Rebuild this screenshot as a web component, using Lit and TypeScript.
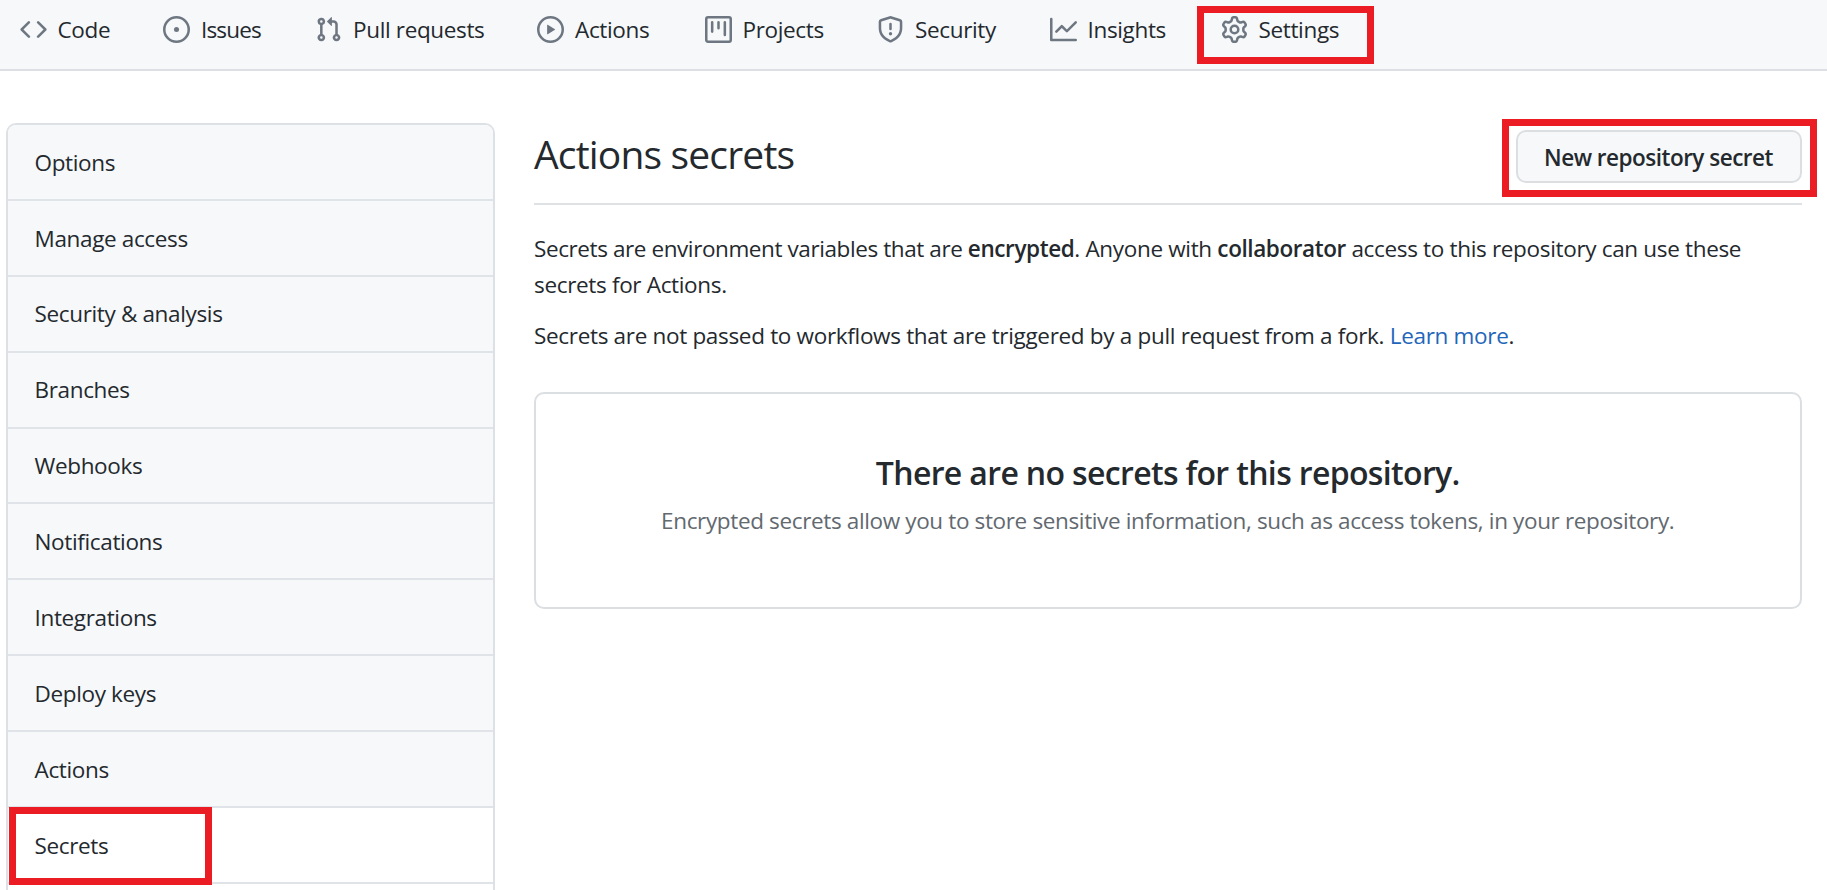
import { LitElement, html, css, svg } from "lit";
import { customElement } from "lit/decorators.js";
import { classMap } from "lit/directives/class-map.js";

// 16px icon set, drawn with the current text colour.
const icons = {
  code: svg`<path fill-rule="evenodd" d="M4.72 3.22a.75.75 0 011.06 1.06L2.06 8l3.72 3.72a.75.75 0 11-1.06 1.06L.47 8.53a.75.75 0 010-1.06l4.25-4.25zm6.56 0a.75.75 0 10-1.06 1.06L13.94 8l-3.72 3.72a.75.75 0 101.06 1.06l4.25-4.25a.75.75 0 000-1.06l-4.25-4.25z"></path>`,
  issue: svg`<path d="M8 9.5a1.5 1.5 0 100-3 1.5 1.5 0 000 3z"></path><path fill-rule="evenodd" d="M8 0a8 8 0 100 16A8 8 0 008 0zM1.5 8a6.5 6.5 0 1113 0 6.5 6.5 0 01-13 0z"></path>`,
  pull: svg`<path fill-rule="evenodd" d="M7.177 3.073L9.573.677A.25.25 0 0110 .854v4.792a.25.25 0 01-.427.177L7.177 3.427a.25.25 0 010-.354zM3.75 2.5a.75.75 0 100 1.5.75.75 0 000-1.5zm-2.25.75a2.25 2.25 0 113 2.122v5.256a2.251 2.251 0 11-1.5 0V5.372A2.25 2.25 0 011.5 3.25zM11 2.5h-1V4h1a1 1 0 011 1v5.628a2.251 2.251 0 101.5 0V5A2.5 2.5 0 0011 2.5zm1 10.25a.75.75 0 111.5 0 .75.75 0 01-1.5 0zM3.75 12a.75.75 0 100 1.5.75.75 0 000-1.5z"></path>`,
  play: svg`<path fill-rule="evenodd" d="M1.5 8a6.5 6.5 0 1113 0 6.5 6.5 0 01-13 0zM8 0a8 8 0 100 16A8 8 0 008 0zM6.379 5.227A.25.25 0 006 5.442v5.117a.25.25 0 00.379.214l4.264-2.559a.25.25 0 000-.428L6.379 5.227z"></path>`,
  project: svg`<path fill-rule="evenodd" d="M1.75 0A1.75 1.75 0 000 1.75v12.5C0 15.216.784 16 1.75 16h12.5A1.75 1.75 0 0016 14.25V1.75A1.75 1.75 0 0014.25 0H1.75zM1.5 1.75a.25.25 0 01.25-.25h12.5a.25.25 0 01.25.25v12.5a.25.25 0 01-.25.25H1.75a.25.25 0 01-.25-.25V1.75zM11.75 3a.75.75 0 00-.75.75v7.5a.75.75 0 001.5 0v-7.5a.75.75 0 00-.75-.75zm-8.25.75a.75.75 0 011.5 0v5.5a.75.75 0 01-1.5 0v-5.5zM8 3a.75.75 0 00-.75.75v3.5a.75.75 0 001.5 0v-3.5A.75.75 0 008 3z"></path>`,
  shield: svg`<path fill-rule="evenodd" d="M7.467.133a1.75 1.75 0 011.066 0l5.25 1.68A1.75 1.75 0 0115 3.48V7c0 1.566-.32 3.182-1.303 4.682-.983 1.498-2.585 2.813-5.032 3.855a1.7 1.7 0 01-1.33 0c-2.447-1.042-4.049-2.357-5.032-3.855C1.32 10.182 1 8.566 1 7V3.48a1.75 1.75 0 011.217-1.667l5.25-1.68zm.61 1.429a.25.25 0 00-.153 0l-5.25 1.68a.25.25 0 00-.174.238V7c0 1.358.275 2.666 1.057 3.86.784 1.194 2.121 2.34 4.366 3.297a.2.2 0 00.154 0c2.245-.956 3.582-2.104 4.366-3.298C13.225 9.666 13.5 8.36 13.5 7V3.48a.25.25 0 00-.174-.237l-5.25-1.68zM9 10.5a1 1 0 11-2 0 1 1 0 012 0zm-.25-5.75a.75.75 0 10-1.5 0v3a.75.75 0 001.5 0v-3z"></path>`,
  graph: svg`<path fill-rule="evenodd" d="M1.5 1.75a.75.75 0 00-1.5 0v12.5c0 .414.336.75.75.75h14.5a.75.75 0 000-1.5H1.5V1.75zm14.28 2.53a.75.75 0 00-1.06-1.06L10 7.94 7.53 5.47a.75.75 0 00-1.06 0L3.22 8.72a.75.75 0 001.06 1.06L7 7.06l2.47 2.47a.75.75 0 001.06 0l5.25-5.25z"></path>`,
  gear: svg`<path fill-rule="evenodd" d="M7.429 1.525a6.593 6.593 0 011.142 0c.036.003.108.036.137.146l.289 1.105c.147.56.55.967.997 1.189.174.086.341.183.501.29.417.278.97.423 1.53.27l1.102-.303c.11-.03.175.016.195.046.219.31.41.641.573.989.014.031.022.11-.059.19l-.815.806c-.411.406-.562.957-.53 1.456a4.588 4.588 0 010 .582c-.032.499.119 1.05.53 1.456l.815.806c.08.08.073.159.059.19a6.494 6.494 0 01-.573.99c-.02.029-.086.074-.195.045l-1.103-.303c-.559-.153-1.112-.008-1.529.27-.16.107-.327.204-.5.29-.449.222-.851.628-.998 1.189l-.289 1.105c-.029.11-.101.143-.137.146a6.613 6.613 0 01-1.142 0c-.036-.003-.108-.037-.137-.146l-.289-1.105c-.147-.56-.55-.967-.997-1.189a4.502 4.502 0 01-.501-.29c-.417-.278-.97-.423-1.53-.27l-1.102.303c-.11.03-.175-.016-.195-.046a6.492 6.492 0 01-.573-.989c-.014-.031-.022-.11.059-.19l.815-.806c.411-.406.562-.957.53-1.456a4.587 4.587 0 010-.582c.032-.499-.119-1.05-.53-1.456l-.815-.806c-.08-.08-.073-.159-.059-.19a6.44 6.44 0 01.573-.99c.02-.029.086-.075.195-.045l1.103.303c.559.153 1.112.008 1.529-.27.16-.107.327-.204.5-.29.449-.222.851-.628.998-1.189l.289-1.105c.029-.11.101-.143.137-.146zM8 0c-.236 0-.47.01-.701.03-.743.065-1.29.615-1.458 1.261l-.29 1.106c-.017.066-.078.158-.211.224a5.994 5.994 0 00-.668.386c-.123.082-.233.09-.3.071L3.27 2.776c-.644-.177-1.392.02-1.82.63a7.977 7.977 0 00-.704 1.217c-.315.675-.111 1.422.363 1.891l.815.806c.05.048.098.147.088.294a6.084 6.084 0 000 .772c.01.147-.038.246-.088.294l-.815.806c-.474.469-.678 1.216-.363 1.891.2.428.436.835.704 1.218.428.609 1.176.806 1.82.63l1.103-.303c.066-.019.176-.011.299.071.213.143.436.272.668.386.133.066.194.158.212.224l.289 1.106c.169.646.715 1.196 1.458 1.26a8.094 8.094 0 001.402 0c.743-.064 1.29-.614 1.458-1.26l.29-1.106c.017-.066.078-.158.211-.224a5.98 5.98 0 00.668-.386c.123-.082.233-.09.3-.071l1.102.302c.644.177 1.392-.02 1.82-.63.268-.382.505-.789.704-1.217.315-.675.111-1.422-.364-1.891l-.814-.806c-.05-.048-.098-.147-.088-.294a6.1 6.1 0 000-.772c-.01-.147.039-.246.088-.294l.814-.806c.475-.469.679-1.216.364-1.891a7.992 7.992 0 00-.704-1.218c-.428-.609-1.176-.806-1.82-.63l-1.103.303c-.066.019-.176.011-.299-.071a5.991 5.991 0 00-.668-.386c-.133-.066-.194-.158-.212-.224L10.16 1.29C9.99.645 9.444.095 8.701.031A8.094 8.094 0 008 0zm1.5 8a1.5 1.5 0 11-3 0 1.5 1.5 0 013 0zM11 8a3 3 0 11-6 0 3 3 0 016 0z"></path>`,
};

const tabs: { label: string; icon: keyof typeof icons }[] = [
  { label: "Code", icon: "code" },
  { label: "Issues", icon: "issue" },
  { label: "Pull requests", icon: "pull" },
  { label: "Actions", icon: "play" },
  { label: "Projects", icon: "project" },
  { label: "Security", icon: "shield" },
  { label: "Insights", icon: "graph" },
  { label: "Settings", icon: "gear" },
];

@customElement("repo-nav")
export class RepoNav extends LitElement {
  static styles = css`
    :host {
      display: block;
    }
    .bar {
      box-sizing: border-box;
      height: 71px;
      padding: 0 0 10px 19.5px;
      display: grid;
      grid-template-columns: 143.5px 152px 222px 167.5px 172.5px 172.5px 171px 120px;
      align-items: center;
      background: #f6f8fa;
      border-bottom: 2px solid #dcdfe4;
    }
    .tab {
      position: relative;
      display: flex;
      align-items: center;
      gap: 11px;
      color: #24292e;
      text-decoration: none;
      line-height: 36px;
      white-space: nowrap;
    }
    .issues {
      letter-spacing: -0.85px;
    }
    svg {
      width: 27px;
      height: 27px;
      flex: none;
      fill: #6e7781;
    }
    .marker {
      position: absolute;
      inset: -6px -33px -16px -24px;
      border: 7px solid #ec1c24;
    }
  `;
  render() {
    return html`<nav class="bar">
      ${tabs.map(
        (t) => html`<a class=${classMap({ tab: true, issues: t.icon === "issue" })}>
          <svg viewBox="0 0 16 16">${icons[t.icon]}</svg><span>${t.label}</span>
          ${t.icon === "gear" ? html`<i class="marker"></i>` : ""}
        </a>`
      )}
    </nav>`;
  }
}

const sections = [
  "Options",
  "Manage access",
  "Security & analysis",
  "Branches",
  "Webhooks",
  "Notifications",
  "Integrations",
  "Deploy keys",
  "Actions",
  "Secrets",
];

@customElement("settings-menu")
export class SettingsMenu extends LitElement {
  static styles = css`
    :host {
      display: block;
    }
    .menu {
      box-sizing: border-box;
      height: 100%;
      border: 2px solid #dde1e5;
      border-width: 2px 2px 0 2px;
      border-radius: 10px 10px 0 0;
      background: #fff;
    }
    .item {
      position: relative;
      box-sizing: border-box;
      height: 75.9px;
      padding: 1px 0 0 26.5px;
      display: flex;
      align-items: center;
      background: #f6f8fa;
      border-bottom: 2px solid #e0e3e7;
      color: #24292e;
    }
    .item:first-child {
      border-radius: 8px 8px 0 0;
    }
    .selected {
      background: #fff;
    }
    .marker {
      position: absolute;
      inset: -1px auto -3px 1px;
      width: 189px;
      border: 7px solid #ec1c24;
    }
  `;
  render() {
    return html`<div class="menu">
      ${sections.map(
        (s) => html`<div class=${classMap({ item: true, selected: s === "Secrets" })}>
          ${s}${s === "Secrets" ? html`<i class="marker"></i>` : ""}
        </div>`
      )}
    </div>`;
  }
}

@customElement("secrets-panel")
export class SecretsPanel extends LitElement {
  static styles = css`
    :host {
      display: block;
    }
    .head {
      box-sizing: border-box;
      height: 82px;
      display: flex;
      justify-content: space-between;
      align-items: flex-start;
      padding-top: 7px;
      border-bottom: 2px solid #dfe2e5;
    }
    h1 {
      margin: 0;
      font-size: 39px;
      font-weight: 400;
      line-height: 48px;
      letter-spacing: -0.83px;
    }
    .new {
      position: relative;
      box-sizing: border-box;
      width: 286px;
      height: 53px;
      border: 2px solid #dcdfe2;
      border-radius: 10px;
      background: #f6f8fa;
      text-align: center;
      line-height: 51px;
      font-weight: 600;
      letter-spacing: -0.5px;
    }
    .marker {
      position: absolute;
      inset: -13px -17px -16px -16px;
      border: 7px solid #ec1c24;
    }
    p {
      margin: 0 0 15.5px;
      line-height: 35.5px;
      letter-spacing: -0.32px;
    }
    .lead {
      margin-top: 26px;
      letter-spacing: -0.33px;
    }
    .tight {
      letter-spacing: -0.41px;
    }
    b {
      font-weight: 600;
      letter-spacing: -0.4px;
    }
    a {
      color: #1f66bb;
    }
    .blank {
      box-sizing: border-box;
      height: 217px;
      margin-top: 38.5px;
      padding-top: 56px;
      border: 2px solid #dcdfe2;
      border-radius: 10px;
      text-align: center;
    }
    h3 {
      margin: 0;
      font-size: 32px;
      font-weight: 600;
      line-height: 46px;
      letter-spacing: -0.65px;
    }
    .hint {
      margin: 7px 0 0;
      color: #62696f;
      letter-spacing: -0.36px;
    }
  `;
  render() {
    return html`
      <div class="head">
        <h1>Actions secrets</h1>
        <div class="new">New repository secret<i class="marker"></i></div>
      </div>
      <p class="lead">
        <span class="tight">Secrets are environment variables that are </span><b>encrypted</b>. Anyone with
        <b>collaborator</b> access to this repository can use these secrets for Actions.
      </p>
      <p>
        Secrets are not passed to workflows that are triggered by a pull request from a fork.
        <a>Learn more</a>.
      </p>
      <div class="blank">
        <h3>There are no secrets for this repository.</h3>
        <p class="hint">
          Encrypted secrets allow you to store sensitive information, such as access tokens, in your repository.
        </p>
      </div>
    `;
  }
}

@customElement("app-root")
export class AppRoot extends LitElement {
  static styles = css`
    :host {
      display: flex;
      flex-direction: column;
      height: 890px;
      overflow: hidden;
      background: #fff;
      color: #24292e;
      font: 400 22.5px/35.5px "Open Sans", "Noto Sans", sans-serif;
      letter-spacing: -0.35px;
    }
    .page {
      flex: 1;
      min-height: 0;
      display: grid;
      grid-template-columns: 489px 1267.5px;
      column-gap: 39px;
      padding: 52px 0 0 6px;
    }
  `;
  render() {
    return html`<repo-nav></repo-nav>
      <main class="page">
        <settings-menu></settings-menu>
        <secrets-panel></secrets-panel>
      </main>`;
  }
}
